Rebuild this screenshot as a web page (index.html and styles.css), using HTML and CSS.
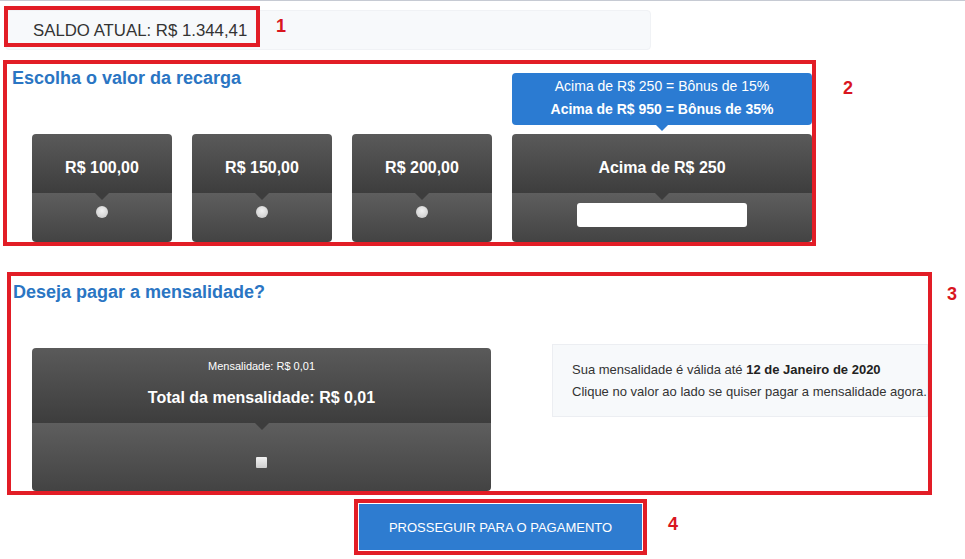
FILE: index.html
```html
<!DOCTYPE html>
<html lang="pt-BR">
<head>
    <meta charset="UTF-8">
    <meta name="viewport" content="width=device-width, initial-scale=1.0">
    <title>Recarga</title>
    <link rel="stylesheet" href="styles.css">
</head>
<body>

<div class="saldo">
    <div class="mark saldo-mark">SALDO ATUAL: R$ 1.344,41</div>
    <span class="num num-1">1</span>
</div>

<div class="row">
    <div class="mark recarga">
        <div class="recarga-left">
            <h2 class="title">Escolha o valor da recarga</h2>
            <div class="cards">
                <div class="card">
                    <div class="card-top">R$ 100,00</div>
                    <div class="card-bottom"><span class="radio"></span></div>
                </div>
                <div class="card">
                    <div class="card-top">R$ 150,00</div>
                    <div class="card-bottom"><span class="radio"></span></div>
                </div>
                <div class="card">
                    <div class="card-top">R$ 200,00</div>
                    <div class="card-bottom"><span class="radio"></span></div>
                </div>
            </div>
        </div>
        <div class="recarga-right">
            <div class="bonus">
                <div>Acima de R$ 250 = Bônus de 15%</div>
                <div class="bonus-strong">Acima de R$ 950 = Bônus de 35%</div>
            </div>
            <div class="card card-wide">
                <div class="card-top">Acima de R$ 250</div>
                <div class="card-bottom"><input type="text" class="valor"></div>
            </div>
        </div>
    </div>
    <span class="num num-2">2</span>
</div>

<div class="row">
    <div class="mark mensal">
        <h2 class="title title-mensal">Deseja pagar a mensalidade?</h2>
        <div class="mensal-row">
            <div class="card card-mensal">
                <div class="card-top">
                    <div class="mensal-small">Mensalidade: R$ 0,01</div>
                    <div class="mensal-total">Total da mensalidade: R$ 0,01</div>
                </div>
                <div class="card-bottom"><span class="check"></span></div>
            </div>
            <div class="info">
                <p>Sua mensalidade é válida até <b>12 de Janeiro de 2020</b></p>
                <p>Clique no valor ao lado se quiser pagar a mensalidade agora.</p>
            </div>
        </div>
    </div>
    <span class="num num-3">3</span>
</div>

<div class="row">
    <div class="mark pay-mark">
        <button class="pay">PROSSEGUIR PARA O PAGAMENTO</button>
    </div>
    <span class="num num-4">4</span>
</div>

</body>
</html>
```

FILE: styles.css
```css
body {
    margin: 0;
    border-top: 1px solid #c6cad3;
    font-family: "Liberation Sans", Arial, sans-serif;
    color: #333;
    background: #fff;
}

.mark { border: 4px solid #e21d26; box-sizing: border-box; }
.num { font-weight: bold; font-size: 18px; line-height: 20px; color: #d9161f; }

/* saldo */
.saldo {
    display: flex;
    align-items: flex-start;
    margin: 9px 0 0 5px;
    width: 646px;
    height: 40px;
    background: #f7f9fb;
    border: 1px solid #f0f2f5;
    border-radius: 4px;
    box-sizing: border-box;
}
.saldo-mark {
    margin: -5px 0 0 -2px;
    width: 256px;
    height: 41px;
    padding: 8px 0 0 25px;
    font-size: 16.8px;
    line-height: 25px;
    white-space: nowrap;
}
.num-1 { margin: 5px 0 0 16px; }

.row { display: flex; align-items: flex-start; }

.title {
    margin: 0;
    padding: 3px 0 0 5px;
    font-size: 18px;
    line-height: 22px;
    color: #2a75c3;
}

/* recarga */
.recarga {
    display: flex;
    margin: 10px 0 0 3px;
    width: 813px;
    height: 186px;
}
.recarga-left { display: flex; flex-direction: column; width: 485px; }
.cards { display: flex; gap: 20px; margin-top: auto; padding-left: 25px; }
.recarga-right { display: flex; flex-direction: column; width: 300px; margin-left: 20px; }
.num-2 { margin: 28px 0 0 27px; }

.card {
    width: 140px;
    height: 108px;
    border-radius: 4px;
    overflow: hidden;
    display: flex;
    flex-direction: column;
    color: #fff;
    text-align: center;
}
.card-wide { width: 300px; margin-top: auto; }
.card-top {
    position: relative;
    height: 59px;
    padding-top: 24px;
    box-sizing: border-box;
    font-size: 16px;
    font-weight: bold;
    line-height: 20px;
    background: linear-gradient(#5a5a5a, #3d3d3d);
}
.card-top::after {
    content: "";
    position: absolute;
    left: 50%;
    bottom: -7px;
    margin-left: -7px;
    border-left: 7px solid transparent;
    border-right: 7px solid transparent;
    border-top: 7px solid #3d3d3d;
    z-index: 1;
}
.card-bottom {
    flex: 1;
    padding-top: 13px;
    box-sizing: border-box;
    background: linear-gradient(#5e5e5e, #434343);
}
.radio {
    display: block;
    margin: 0 auto;
    width: 12px;
    height: 12px;
    border-radius: 50%;
    background: radial-gradient(circle at 50% 40%, #f2f2f2, #c6c6c6);
}
.valor {
    display: block;
    margin: -3px auto 0;
    width: 170px;
    height: 24px;
    padding: 0;
    box-sizing: border-box;
    border: 0;
    border-radius: 3px;
    background: #fff;
}

.bonus {
    position: relative;
    margin-top: 9px;
    height: 52px;
    padding-top: 2px;
    box-sizing: border-box;
    border-radius: 4px;
    background: #2b7bd2;
    color: #fff;
    font-size: 14px;
    line-height: 23px;
    text-align: center;
}
.bonus-strong { font-weight: bold; }
.bonus::after {
    content: "";
    position: absolute;
    left: 50%;
    bottom: -6px;
    margin-left: -6px;
    border-left: 6px solid transparent;
    border-right: 6px solid transparent;
    border-top: 6px solid #2b7bd2;
}

/* mensalidade */
.mensal {
    margin: 26px 0 0 7px;
    width: 925px;
    height: 223px;
}
.title-mensal { padding: 5px 0 0 2px; }
.mensal-row { display: flex; align-items: flex-start; margin-top: 41px; }
.card-mensal { width: 459px; height: 143px; margin: 4px 0 0 21px; }
.card-mensal .card-top { height: 75px; padding-top: 10px; font-weight: normal; }
.mensal-small { font-size: 11px; line-height: 16px; }
.mensal-total { margin-top: 12px; font-size: 16px; font-weight: bold; line-height: 24px; }
.card-mensal .card-bottom { padding-top: 34px; }
.check {
    display: block;
    margin: 0 auto;
    width: 11px;
    height: 11px;
    border-radius: 1px;
    background: linear-gradient(#f2f2f2, #cfcfcf);
}
.info {
    flex: 1;
    min-width: 0;
    margin-left: 61px;
    height: 73px;
    padding: 14px 0 0 19px;
    box-sizing: border-box;
    background: #f7f9fb;
    border: 1px solid #eceef2;
    font-size: 13px;
    line-height: 22px;
    color: #333;
    white-space: nowrap;
    overflow: hidden;
}
.info p { margin: 0; }
.info b { color: #222; }
.num-3 { margin: 38px 0 0 15px; }

/* pagamento */
.pay-mark {
    margin: 4px 0 0 354px;
    padding: 1px;
    width: 293px;
    height: 56px;
}
.pay {
    display: block;
    width: 100%;
    height: 46px;
    border: 0;
    background: #2e7cd0;
    color: #fff;
    font-family: "Liberation Sans", Arial, sans-serif;
    font-size: 13px;
    cursor: pointer;
}
.num-4 { margin: 19px 0 0 21px; }
```
